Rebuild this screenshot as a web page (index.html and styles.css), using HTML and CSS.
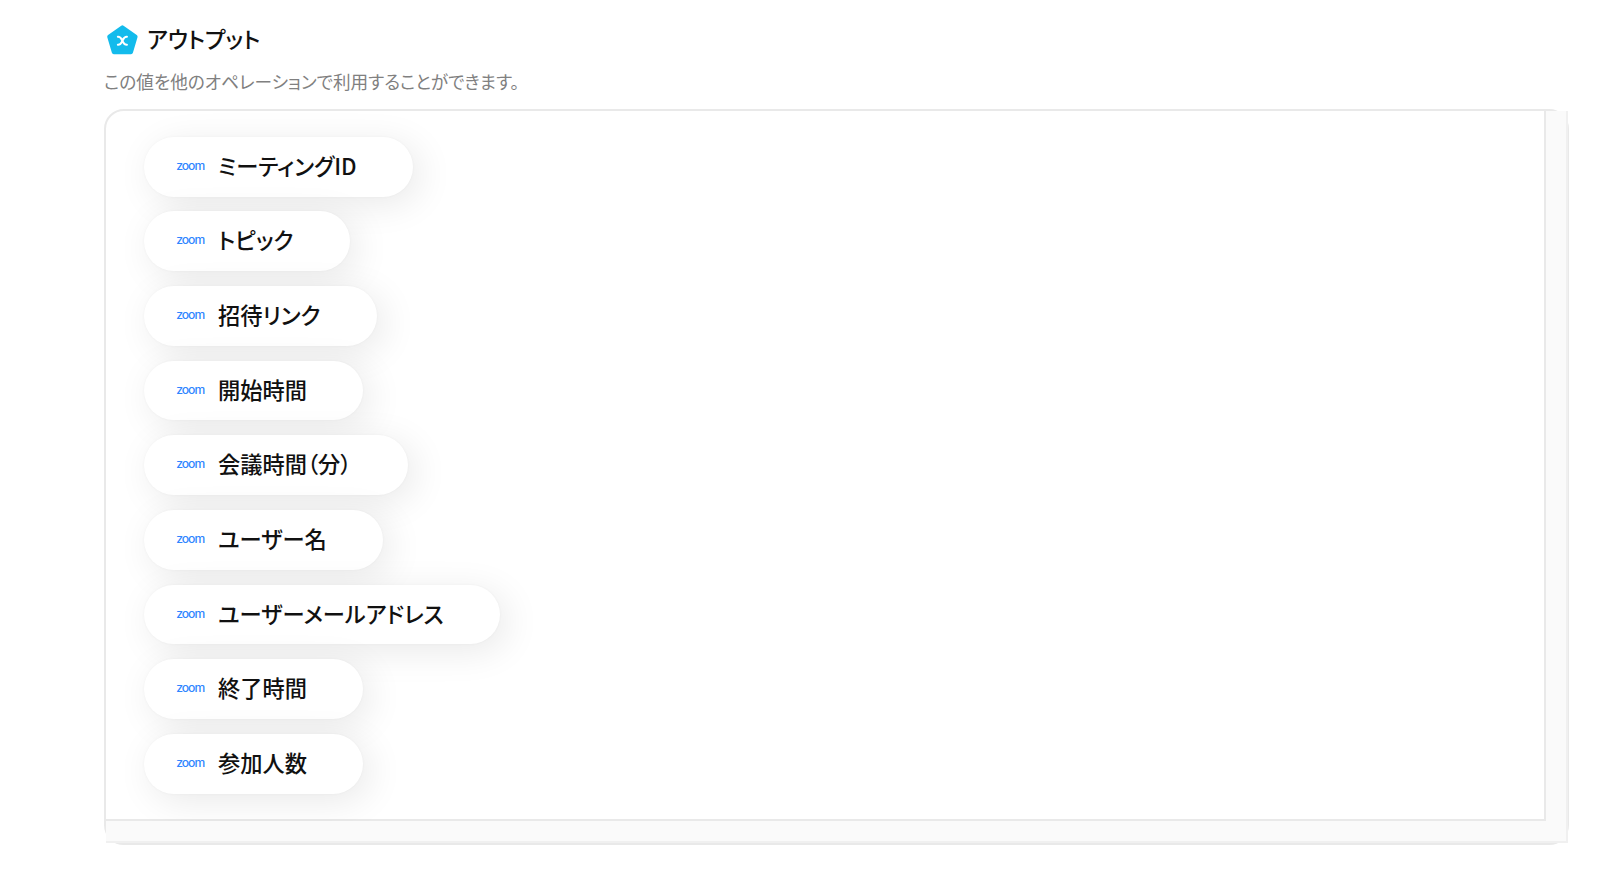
FILE: index.html
```html
<!DOCTYPE html>
<html lang="ja">
<head>
    <meta charset="UTF-8">
    <meta name="viewport" content="width=device-width, initial-scale=1.0">
    <title>アウトプット</title>
    <link rel="stylesheet" href="styles.css">
</head>
<body>
    <!-- Header -->
    <div class="header">
        <svg class="header-icon" viewBox="0 0 37 37">
            <path class="badge" d="M18.4 6.3 L31.6 15.6 L27 31.2 H9.8 L5.2 15.6 Z"/>
            <path class="mark" d="M13.9 15.8 C16.8 15.6 17.2 17.6 18.4 19.8 C19.6 22 20 24 22.9 23.8 M22.9 15.8 C20 15.6 19.6 17.6 18.4 19.8 C17.2 22 16.8 24 13.9 23.8"/>
        </svg>
        <h1 class="title">アウトプット</h1>
    </div>
    <p class="description">この値を他のオペレーションで利用することができます。</p>

    <!-- Output list -->
    <div class="output-box">
        <div class="output-list">
            <div class="pill">
                <svg class="logo" viewBox="0 0 30 16"><text x="1.2" y="11.3" textLength="28" lengthAdjust="spacingAndGlyphs">zoom</text></svg>
                <span class="label">ミーティングID</span>
            </div>
            <div class="pill">
                <svg class="logo" viewBox="0 0 30 16"><text x="1.2" y="11.3" textLength="28" lengthAdjust="spacingAndGlyphs">zoom</text></svg>
                <span class="label">トピック</span>
            </div>
            <div class="pill">
                <svg class="logo" viewBox="0 0 30 16"><text x="1.2" y="11.3" textLength="28" lengthAdjust="spacingAndGlyphs">zoom</text></svg>
                <span class="label">招待リンク</span>
            </div>
            <div class="pill">
                <svg class="logo" viewBox="0 0 30 16"><text x="1.2" y="11.3" textLength="28" lengthAdjust="spacingAndGlyphs">zoom</text></svg>
                <span class="label">開始時間</span>
            </div>
            <div class="pill">
                <svg class="logo" viewBox="0 0 30 16"><text x="1.2" y="11.3" textLength="28" lengthAdjust="spacingAndGlyphs">zoom</text></svg>
                <span class="label">会議時間（分）</span>
            </div>
            <div class="pill">
                <svg class="logo" viewBox="0 0 30 16"><text x="1.2" y="11.3" textLength="28" lengthAdjust="spacingAndGlyphs">zoom</text></svg>
                <span class="label">ユーザー名</span>
            </div>
            <div class="pill">
                <svg class="logo" viewBox="0 0 30 16"><text x="1.2" y="11.3" textLength="28" lengthAdjust="spacingAndGlyphs">zoom</text></svg>
                <span class="label">ユーザーメールアドレス</span>
            </div>
            <div class="pill">
                <svg class="logo" viewBox="0 0 30 16"><text x="1.2" y="11.3" textLength="28" lengthAdjust="spacingAndGlyphs">zoom</text></svg>
                <span class="label">終了時間</span>
            </div>
            <div class="pill">
                <svg class="logo" viewBox="0 0 30 16"><text x="1.2" y="11.3" textLength="28" lengthAdjust="spacingAndGlyphs">zoom</text></svg>
                <span class="label">参加人数</span>
            </div>
        </div>
        <div class="track track-right"></div>
        <div class="track track-bottom"></div>
    </div>
</body>
</html>
```

FILE: styles.css
```css
* {
    margin: 0;
    padding: 0;
    box-sizing: border-box;
}

body {
    height: 871px;
    padding: 20px 31px 0 104px;
    background-color: #fff;
    color: #111;
    font-family: "Noto Sans CJK JP", sans-serif;
    font-feature-settings: "palt";
    overflow: hidden;
}

/* Header */
.header {
    display: flex;
    align-items: center;
    height: 38px;
}

.header-icon {
    width: 37px;
    height: 37px;
    margin-right: 6px;
}

.badge {
    fill: #13bbec;
    stroke: #13bbec;
    stroke-width: 4;
    stroke-linejoin: round;
}

.mark {
    fill: none;
    stroke: #fff;
    stroke-width: 2.1;
    stroke-linecap: round;
}

.title {
    padding-bottom: 2px;
    font-size: 22.3px;
    font-weight: 500;
    line-height: 36px;
}

.description {
    height: 51px;
    padding-top: 11px;
    color: #808080;
    font-size: 17.65px;
    line-height: 26px;
}

/* Output box */
.output-box {
    display: grid;
    grid-template-columns: 1fr 21px;
    grid-template-rows: 1fr 22px;
    width: 1465px;
    height: 736px;
    border: 2px solid #e9e9e9;
    border-radius: 20px;
}

.output-list {
    display: flex;
    flex-direction: column;
    align-items: flex-start;
    gap: 14.93px;
    padding: 25.8px 37.6px 0;
    border-right: 2px solid #e9e9e9;
    border-bottom: 2px solid #e9e9e9;
}

.track {
    background-color: #fafafa;
}

.track-right {
    margin-right: -1px;
    border-right: 2px solid #f0f0f0;
}

.track-bottom {
    grid-column: 1 / 3;
    margin-right: -1px;
    border-right: 2px solid #f0f0f0;
    border-bottom: 2px solid #f0f0f0;
}

/* Pills */
.pill {
    display: flex;
    align-items: center;
    height: 59.73px;
    padding: 0 56.4px 0 31px;
    border-radius: 30px;
    background-color: #fff;
    box-shadow: 0 0 3px rgba(0, 0, 0, 0.04), 7px 7px 37px rgba(0, 0, 0, 0.09);
    white-space: nowrap;
}

.label {
    padding-bottom: 4px;
    font-size: 22.25px;
    font-weight: 500;
    line-height: 32px;
}

.logo {
    width: 30px;
    height: 16px;
    margin-right: 13.4px;
    fill: #2f86ff;
    font-family: Inter, sans-serif;
    font-size: 11.3px;
    font-weight: 500;
    letter-spacing: -0.9px;
}
```
